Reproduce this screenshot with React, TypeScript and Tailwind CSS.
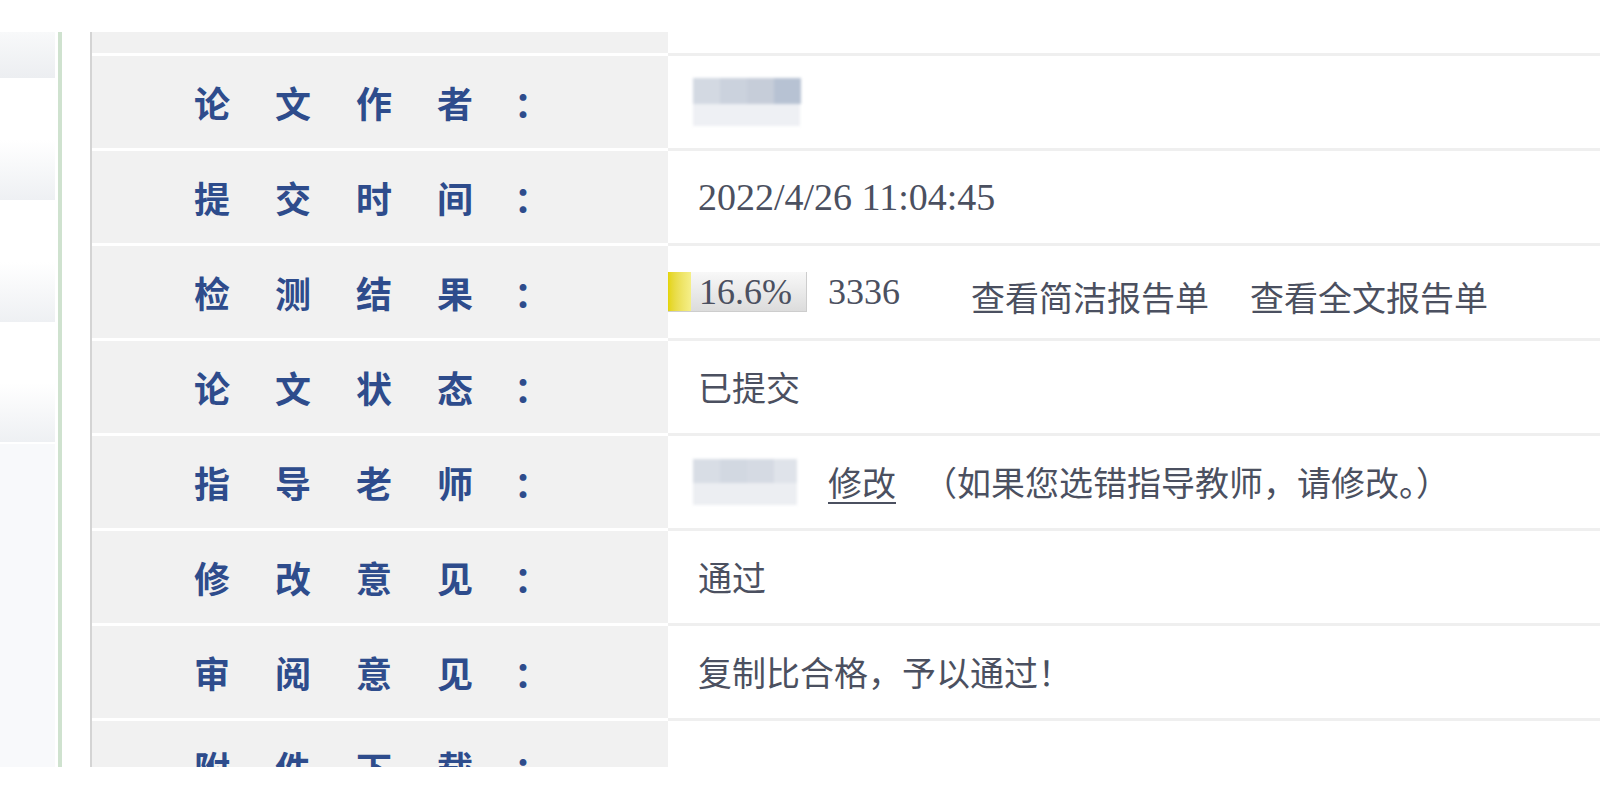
import React from 'react';

const cjk = { fontFamily: '"Noto Sans CJK SC", "Noto Sans", sans-serif' };
const serif = { fontFamily: '"Liberation Serif", "Noto Sans CJK SC", serif' };

type Row = { label: string; value: React.ReactNode; pad?: string };

function Blurred({ widths }: { widths: string[] }) {
    return (
        <div className="flex flex-col blur-[1.5px]">
            <div className="flex h-[26px]">
                {widths.map((c, i) => (
                    <div key={i} className="w-[27px] h-full" style={{ backgroundColor: c }} />
                ))}
            </div>
            <div className="h-[22px] w-[107px] bg-[#eef0f4]" />
        </div>
    );
}

function CheckResult({ percent }: { percent: number }) {
    return (
        <div className="flex items-center h-full">
            <div className="flex items-center w-[139px] h-[40px] bg-linear-to-b from-[#f8f8f8] to-[#dcdcdc] border-r border-b border-[#cdcdcd]">
                <div
                    className="h-full bg-linear-to-r from-[#e4d400] to-[#f5ef88]"
                    style={{ width: `${percent}%` }}
                />
                <span className="ml-[8px] text-[36px] leading-none text-[#4b5060]" style={serif}>
                    {percent.toFixed(1)}%
                </span>
            </div>
            <span className="ml-[21px] text-[36px] leading-none text-[#4b5060]" style={serif}>3336</span>
            <span className="ml-[71px] text-[34px] leading-none text-[#4b5060] mt-[10px]" style={cjk}>查看简洁报告单</span>
            <span className="ml-[41px] text-[34px] leading-none text-[#4b5060] mt-[10px]" style={cjk}>查看全文报告单</span>
        </div>
    );
}

const rows: Row[] = [
    { label: '论文作者', value: <Blurred widths={['#d3d9e2', '#cbd2dd', '#c6cdd9', '#b7c2d3']} />, pad: 'pl-[25px]' },
    { label: '提交时间', value: <span className="text-[38px] leading-none text-[#4b5060]" style={serif}>2022/4/26 11:04:45</span> },
    { label: '检测结果', value: <CheckResult percent={16.6} />, pad: 'pl-0' },
    { label: '论文状态', value: <span className="text-[34px] leading-none text-[#4b5060]" style={cjk}>已提交</span> },
    {
        label: '指导老师',
        value: (
            <div className="flex items-center text-[34px] leading-none text-[#4b5060]" style={cjk}>
                <div className="flex flex-col blur-[1.5px]">
                    <div className="flex h-[24px]">
                        <div className="w-[27px] h-full bg-[#d8dde5]" />
                        <div className="w-[27px] h-full bg-[#d2d8e1]" />
                        <div className="w-[27px] h-full bg-[#d5dae3]" />
                        <div className="w-[23px] h-full bg-[#dfe3ea]" />
                    </div>
                    <div className="h-[22px] w-[104px] bg-[#eceef2]" />
                </div>
                <span className="ml-[31px] underline underline-offset-[6px] decoration-[2px]">修改</span>
                <span className="ml-[27px]">（如果您选错指导教师，请修改。）</span>
            </div>
        ),
        pad: 'pl-[25px]',
    },
    { label: '修改意见', value: <span className="text-[34px] leading-none text-[#4b5060]" style={cjk}>通过</span> },
    { label: '审阅意见', value: <span className="text-[34px] leading-none text-[#4b5060]" style={cjk}>复制比合格，予以通过！</span> },
    { label: '附件下载', value: null },
];

function Label({ text }: { text: string }) {
    return (
        <div className="flex items-center text-[36px] font-bold leading-none text-[#2e4c8c]" style={cjk}>
            {text.split('').map((ch, i) => (
                <span key={i} className="w-[81px]">{ch}</span>
            ))}
            <span className="ml-[-4px]">：</span>
        </div>
    );
}

export default function App() {
    return (
        <div className="w-[1600px] h-[800px] bg-white overflow-hidden">
            <div className="h-[32px]" />
            <div className="flex h-[735px] overflow-hidden">
                {/* side menu */}
                <div className="w-[55px] flex flex-col">
                    <div className="h-[46px] bg-linear-to-b from-[#f8f9fa] to-[#eceef1]" />
                    <div className="h-[2px] bg-white" />
                    <div className="h-[120px] bg-linear-to-b from-white via-white to-[#eef0f3]" />
                    <div className="h-[2px] bg-white" />
                    <div className="h-[120px] bg-linear-to-b from-white via-white to-[#eef0f3]" />
                    <div className="h-[2px] bg-white" />
                    <div className="h-[118px] bg-linear-to-b from-white via-white to-[#eef0f3]" />
                    <div className="h-[2px] bg-white" />
                    <div className="flex-1 bg-[#f8f9fb]" />
                </div>
                <div className="w-[3px]" />
                <div className="w-[4px] bg-[#cfe2cf]" />
                <div className="w-[28px]" />
                <div className="w-[2px] bg-[#d4d4d4]" />

                {/* detail table */}
                <div className="flex-1 flex flex-col">
                    <div className="flex h-[21px] shrink-0">
                        <div className="w-[576px] bg-[#f1f1f1]" />
                        <div className="flex-1 bg-white" />
                    </div>
                    {rows.map((row) => (
                        <div key={row.label} className="flex h-[95px] shrink-0">
                            <div className="w-[576px] bg-[#f1f1f1] border-t-[3px] border-white pl-[102px] flex items-center">
                                <Label text={row.label} />
                            </div>
                            <div className={`flex-1 border-t-[3px] border-[#efefef] flex items-center ${row.pad ?? 'pl-[30px]'}`}>
                                {row.value}
                            </div>
                        </div>
                    ))}
                </div>
            </div>
        </div>
    );
}
